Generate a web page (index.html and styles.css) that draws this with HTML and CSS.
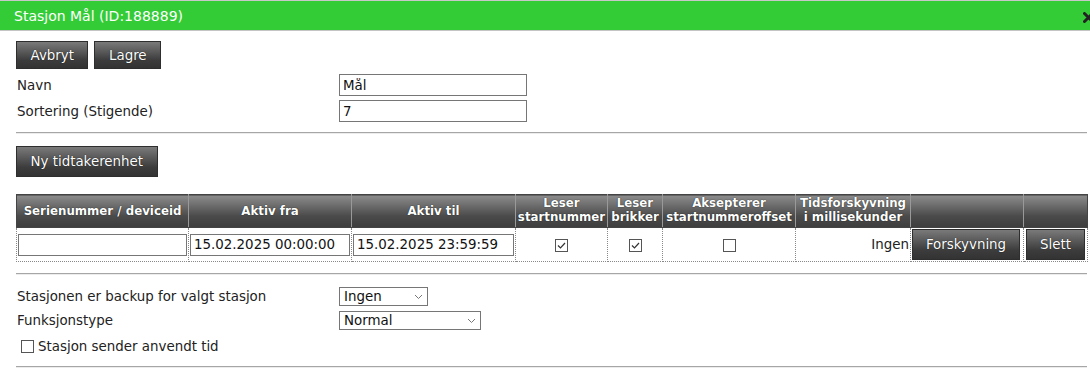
FILE: index.html
```html
<!DOCTYPE html>
<html lang="no">
<head>
<meta charset="utf-8">
<title>Stasjon Mål</title>
<link rel="stylesheet" href="styles.css">
</head>
<body>
<div class="dialog">
  <div class="titlebar">
    <span class="title">Stasjon Mål (ID:188889)</span>
    <span class="close" aria-label="Lukk"><svg width="11" height="11" viewBox="0 0 11 11"><path d="M1.5 1.5 L9.5 9.5 M9.5 1.5 L1.5 9.5" stroke="#222" stroke-width="3" stroke-linecap="round"/></svg></span>
  </div>
  <div class="content">
    <div class="actions">
      <button class="btn">Avbryt</button>
      <button class="btn">Lagre</button>
    </div>
    <div class="form">
      <label class="lbl">Navn</label>
      <input class="txt w188" type="text" value="Mål">
      <label class="lbl">Sortering (Stigende)</label>
      <input class="txt w188" type="text" value="7">
    </div>
    <div class="rule"></div>
    <button class="btn btn-tall">Ny tidtakerenhet</button>
    <table class="units">
      <thead>
        <tr>
          <th class="c1">Serienummer / deviceid</th>
          <th class="c2">Aktiv fra</th>
          <th class="c3">Aktiv til</th>
          <th class="c4">Leser<br>startnummer</th>
          <th class="c5">Leser<br>brikker</th>
          <th class="c6">Aksepterer<br>startnummeroffset</th>
          <th class="c7">Tidsforskyvning<br>i millisekunder</th>
          <th class="c8"></th>
          <th class="c9"></th>
        </tr>
      </thead>
      <tbody>
        <tr>
          <td><input class="txt cell-in" type="text" value=""></td>
          <td><input class="txt cell-in" type="text" value="15.02.2025 00:00:00"></td>
          <td><input class="txt cell-in" type="text" value="15.02.2025 23:59:59"></td>
          <td class="center"><span class="cb"><svg width="11" height="11" viewBox="0 0 11 11"><path d="M2 5.5 L4.5 8 L9 3" fill="none" stroke="#333" stroke-width="1.2"/></svg></span></td>
          <td class="center"><span class="cb"><svg width="11" height="11" viewBox="0 0 11 11"><path d="M2 5.5 L4.5 8 L9 3" fill="none" stroke="#333" stroke-width="1.2"/></svg></span></td>
          <td class="center"><span class="cb"></span></td>
          <td class="right">Ingen</td>
          <td class="btncell"><button class="btn btn-row w108">Forskyvning</button></td>
          <td class="btncell"><button class="btn btn-row w59">Slett</button></td>
        </tr>
      </tbody>
    </table>
    <div class="rule rule2"></div>
    <div class="form form2">
      <label class="lbl">Stasjonen er backup for valgt stasjon</label>
      <div class="sel w89"><span>Ingen</span><svg width="9" height="6" viewBox="0 0 9 6"><path d="M1 1 L4.5 4.5 L8 1" fill="none" stroke="#777" stroke-width="1"/></svg></div>
      <label class="lbl">Funksjonstype</label>
      <div class="sel w142"><span>Normal</span><svg width="9" height="6" viewBox="0 0 9 6"><path d="M1 1 L4.5 4.5 L8 1" fill="none" stroke="#777" stroke-width="1"/></svg></div>
    </div>
    <div class="checkrow"><span class="cb"></span><span>Stasjon sender anvendt tid</span></div>
    <div class="rule rule3"></div>
  </div>
</div>
</body>
</html>
```

FILE: styles.css
```css
html, body {
  margin: 0;
  padding: 0;
  background: #fff;
  overflow: hidden;
}
body {
  font-family: "DejaVu Sans", Verdana, sans-serif;
  font-size: 13.4px;
  color: #222;
}
.dialog {
  width: 1090px;
}
.titlebar {
  height: 29px;
  background: #33cc36;
  border-top: 1px solid #c8c8c8;
  border-bottom: 1px solid #c4c4c4;
  display: flex;
  align-items: center;
  justify-content: space-between;
}
.title {
  color: #fff;
  padding-left: 14px;
  font-size: 14px;
}
.close {
  display: flex;
  margin-right: -4px;
  margin-top: 3px;
}
.content {
  padding: 10px 3px 0 16px;
}
.actions {
  display: flex;
  gap: 6px;
}
.btn {
  font-family: "DejaVu Sans", Verdana, sans-serif;
  font-size: 13.4px;
  color: #fff;
  text-shadow: 0 0 1px #000;
  background: linear-gradient(#7a7a7a, #3c3c3c 70%, #333);
  border: 1px solid #2e2e2e;
  height: 28px;
  padding: 0 13.5px;
  margin: 0;
  cursor: pointer;
}
.btn-tall {
  height: 31px;
  padding: 0 13.5px;
  margin-top: 12px;
  display: block;
}
.form {
  display: grid;
  grid-template-columns: 323px auto;
  row-gap: 4px;
  align-items: center;
  margin-top: 5px;
  justify-items: start;
}
.lbl {
  padding-left: 1px;
}
.txt {
  font-family: "DejaVu Sans", Verdana, sans-serif;
  font-size: 13.4px;
  color: #111;
  border: 1px solid #767676;
  height: 22px;
  box-sizing: border-box;
  padding: 0 3px;
  margin: 0;
  background: #fff;
}
.w188 { width: 188px; }
.rule {
  border-top: 1px solid #a6a6a6;
  border-bottom: 1px solid #ececec;
  margin-top: 10px;
}
.units {
  border-collapse: collapse;
  margin-top: 17px;
  table-layout: fixed;
  width: 1071px;
}
.units th {
  height: 33px;
  box-sizing: border-box;
  padding: 0 1px;
  color: #fff;
  font-weight: bold;
  font-size: 11.8px;
  line-height: 14px;
  text-shadow: 0 0 1px #000;
  background: linear-gradient(#8c8c8c, #4a4a4a 65%, #3e3e3e);
  border: 1px solid #999;
  border-top-color: #444;
  border-bottom-color: #444;
  vertical-align: bottom;
  padding-bottom: 3px;
  white-space: nowrap;
}
.units th.c1, .units th.c2, .units th.c3 {
  vertical-align: middle;
  padding-bottom: 0;
}
.units th:first-child { border-left-color: #444; }
.units th:last-child { border-right-color: #444; }
.c1 { width: 172px; }
.c2 { width: 163px; }
.c3 { width: 164px; }
.c4 { width: 92px; }
.c5 { width: 55px; }
.c6 { width: 133px; }
.c7 { width: 115px; }
.c8 { width: 113px; }
.c9 { width: 64px; }
.units td {
  border: 1px dotted #888;
  height: 34px;
  box-sizing: border-box;
  padding: 0 1px;
}
.cell-in {
  width: 100%;
  height: 22px;
  display: block;
}
.center { text-align: center; }
.right { text-align: right; }
.cb {
  display: inline-flex;
  width: 13px;
  height: 13px;
  box-sizing: border-box;
  border: 1px solid #555;
  background: #fff;
  align-items: center;
  justify-content: center;
  vertical-align: middle;
}
.cb svg { display: block; }
.btncell { padding: 0 1px; }
.btn-row {
  height: 31px;
  display: block;
  padding: 0;
}
.w108 { width: 108px; }
.w59 { width: 59px; margin-left: 1px; }
.rule2 { margin-top: 11px; }
.form2 {
  margin-top: 12px;
  row-gap: 5px;
}
.sel {
  height: 19px;
  box-sizing: border-box;
  border: 1px solid #767676;
  display: flex;
  align-items: center;
  justify-content: space-between;
  padding: 0 4px 0 4px;
  color: #111;
}
.w89 { width: 89px; }
.w142 { width: 142px; }
.checkrow {
  display: flex;
  align-items: center;
  gap: 4px;
  margin-top: 9px;
  padding-left: 5px;
}
.rule3 { margin-top: 12px; }
```
